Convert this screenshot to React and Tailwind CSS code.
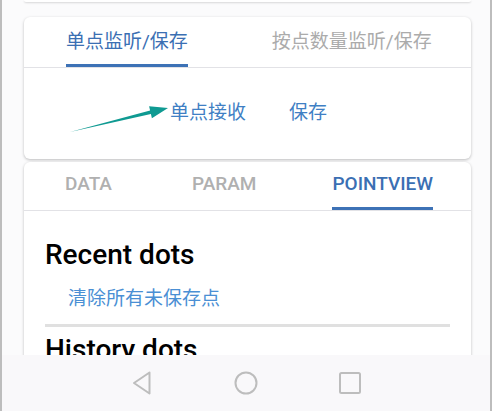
import React from 'react';

const FONT = "font-['Roboto','Noto_Sans_CJK_SC',sans-serif]";

// top tabs of the listening card
const TopTab = ({ label, active }) => (
  <div className="flex flex-col px-[42px]">
    <div
      className={`h-[47px] pt-[3px] flex items-center text-[19px] whitespace-nowrap ${
        active ? 'text-[#3b6fb3]' : 'text-[#ababab]'
      }`}
    >
      {label}
    </div>
    <div className={`h-[3px] ${active ? 'bg-[#3d72b6]' : 'bg-transparent'}`} />
  </div>
);

const ViewTab = ({ label, active, pad }) => (
  <div className={`flex flex-col ${pad}`}>
    <div
      className={`h-[45px] flex items-center text-[19px] font-medium ${
        active ? 'text-[#3b6fb3]' : 'text-[#b0b0b0]'
      }`}
    >
      {label}
    </div>
    <div className={`h-[3px] ${active ? 'bg-[#3d72b6]' : 'bg-transparent'}`} />
  </div>
);

export default function App() {
  return (
    <div className={`h-[411px] flex flex-col bg-[#fbfbfc] border-x-2 border-[#bdbdbd] ${FONT}`}>
      <div className="flex-1 overflow-hidden">
        {/* bottom of the card above, scrolled out */}
        <div className="ml-[22px] w-[447px] h-[2px] bg-white rounded-b-md shadow-[0_1px_2px_rgba(0,0,0,0.15)]" />

        {/* listening card */}
        <div className="ml-[22px] w-[447px] mt-[15px] h-[142px] bg-white rounded-md shadow-[0_1px_3px_rgba(0,0,0,0.25)] flex flex-col">
          <div className="flex border-b border-[#e2e2e6]">
            <TopTab label="单点监听/保存" active />
            <TopTab label="按点数量监听/保存" />
          </div>
          <div className="relative flex-1 flex items-center pl-[146px] gap-[43px] text-[19px] text-[#3f7fc4]">
            <svg className="absolute left-0 top-0" width="447" height="91" viewBox="0 0 447 91">
              <polygon
                points="46,64 126.1,42.6 125.1,38.2 144,40 127.9,50.3 126.9,45.9"
                fill="#0f9a92"
              />
            </svg>
            <span className="relative">单点接收</span>
            <span>保存</span>
          </div>
        </div>

        {/* point view card */}
        <div className="ml-[22px] w-[447px] mt-[3px] bg-white rounded-t-md shadow-[0_1px_3px_rgba(0,0,0,0.25)]">
          <div className="flex border-b border-[#e2e2e6]">
            <ViewTab label="DATA" pad="pl-[41px] pr-[40px]" />
            <ViewTab label="PARAM" pad="pl-[40px] pr-[37px]" />
            <ViewTab label="POINTVIEW" pad="pl-[39px]" active />
          </div>
          <div className="px-[21px] pt-[30px] pb-6">
            <div className="text-[28px] leading-[27px] font-medium text-black">Recent dots</div>
            <div className="mt-[21px] pl-[23px] text-[19px] leading-[19px] text-[#4a8fd4]">清除所有未保存点</div>
            <div className="mt-[16px] h-[3px] bg-[#e0e0e0]" />
            <div className="mt-[9px] text-[28px] leading-[27px] font-medium text-black">History dots</div>
          </div>
        </div>
      </div>

      {/* system navigation bar */}
      <div className="h-[56px] bg-[#f9f8fa] flex items-center justify-center gap-[80px] pb-[1px]">
        <svg width="24" height="24" viewBox="0 0 24 24">
          <path d="M19.5 1.5 L4 12 L19.5 22.5 Z" fill="none" stroke="#bdbdbd" strokeWidth="2" strokeLinejoin="round" />
        </svg>
        <svg width="24" height="24" viewBox="0 0 24 24">
          <circle cx="12" cy="12" r="10.5" fill="none" stroke="#bdbdbd" strokeWidth="2" />
        </svg>
        <svg width="24" height="24" viewBox="0 0 24 24">
          <rect x="2" y="2" width="20" height="20" rx="1.5" fill="none" stroke="#bdbdbd" strokeWidth="2" />
        </svg>
      </div>
    </div>
  );
}
